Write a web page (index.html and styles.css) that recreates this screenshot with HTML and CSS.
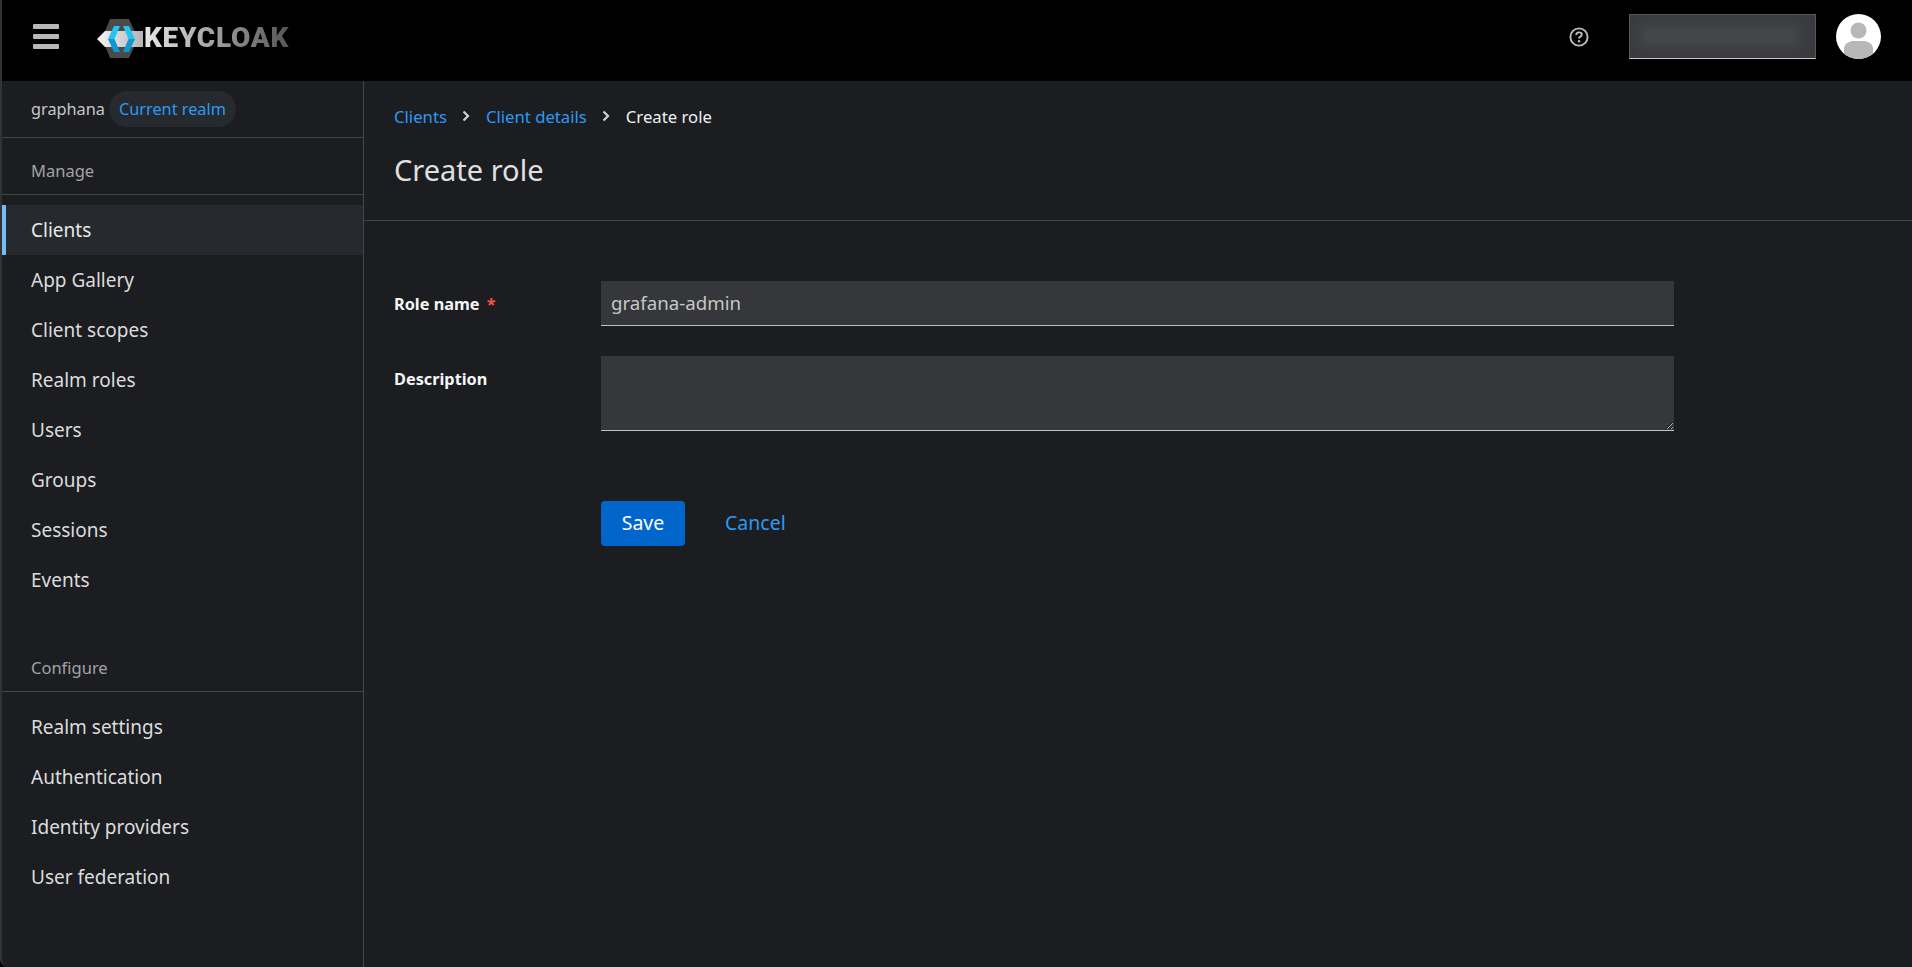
FILE: index.html
```html
<!DOCTYPE html>
<html lang="en">
<head>
  <meta charset="UTF-8">
  <title>Keycloak - Create role</title>
  <link rel="stylesheet" href="styles.css">
</head>
<body>
  <header class="topbar">
    <button class="burger" aria-label="Menu"><span></span><span></span><span></span></button>
    <a class="brand" href="#">
      <svg class="brand-mark" viewBox="0 0 50 40" width="50" height="40">
        <defs>
          <linearGradient id="band" x1="0" x2="1" y1="0" y2="0">
            <stop offset="0" stop-color="#f5f5f5"/>
            <stop offset="1" stop-color="#b4b4b4"/>
          </linearGradient>
          <linearGradient id="chevron" x1="0" x2="0" y1="0" y2="1">
            <stop offset="0" stop-color="#25c3ef"/>
            <stop offset="0.5" stop-color="#25c3ef"/>
            <stop offset="0.5" stop-color="#0f97cf"/>
            <stop offset="1" stop-color="#0f97cf"/>
          </linearGradient>
        </defs>
        <polygon points="13,0 32,0 41,19.500 32,39 13,39 5,19.500" fill="#4a4a4a"/>
        <polygon points="0,20 8,12 46,12 46,28 8,28" fill="url(#band)"/>
        <polygon points="17,7 23,7 17.500,20 23,33 17,33 11,20" fill="url(#chevron)"/>
        <polygon points="32,7 26,7 31.500,20 26,33 32,33 38,20" fill="url(#chevron)"/>
      </svg>
      <span class="brand-text">KEYCLOAK</span>
    </a>
    <div class="topbar-right">
      <svg class="help" viewBox="0 0 20 20" width="20" height="20">
        <circle cx="10" cy="10" r="8.600" fill="none" stroke="#bcbcbc" stroke-width="1.900"/>
        <path d="M7.200 8c0-1.700 1.200-2.600 2.800-2.600s2.800.9 2.800 2.300c0 1.900-2.800 1.900-2.800 3.800" fill="none" stroke="#bcbcbc" stroke-width="1.900"/>
        <circle cx="10" cy="14.300" r="1.200" fill="#bcbcbc"/>
      </svg>
      <div class="user-box"><div class="user-blur"></div></div>
      <svg class="avatar" viewBox="0 0 45 45" width="45" height="45">
        <defs><clipPath id="round"><circle cx="22.500" cy="22.500" r="22.500"/></clipPath></defs>
        <circle cx="22.500" cy="22.500" r="22.500" fill="#fff"/>
        <g clip-path="url(#round)" fill="#b8b8b8">
          <circle cx="22.500" cy="16.500" r="8"/>
          <path d="M8 45V35c0-5 4-7 8-8h13c4 1 8 3 8 8v10z"/>
        </g>
      </svg>
    </div>
  </header>

  <div class="shell">
    <nav class="sidebar">
      <div class="realm">
        <span class="realm-name">graphana</span>
        <span class="realm-chip">Current realm</span>
      </div>
      <div class="nav-title">Manage</div>
      <ul class="nav-list">
        <li class="active"><a href="#">Clients</a></li>
        <li><a href="#">App Gallery</a></li>
        <li><a href="#">Client scopes</a></li>
        <li><a href="#">Realm roles</a></li>
        <li><a href="#">Users</a></li>
        <li><a href="#">Groups</a></li>
        <li><a href="#">Sessions</a></li>
        <li><a href="#">Events</a></li>
      </ul>
      <div class="nav-title nav-title-next">Configure</div>
      <ul class="nav-list">
        <li><a href="#">Realm settings</a></li>
        <li><a href="#">Authentication</a></li>
        <li><a href="#">Identity providers</a></li>
        <li><a href="#">User federation</a></li>
      </ul>
    </nav>

    <main class="content">
      <section class="page-head">
        <ol class="crumbs">
          <li><a href="#">Clients</a></li>
          <li class="sep"><svg viewBox="0 0 8 12" width="8" height="12"><path d="M1.500 1.500 6 6l-4.500 4.500" fill="none" stroke="#d2d2d2" stroke-width="2.200"/></svg></li>
          <li><a href="#">Client details</a></li>
          <li class="sep"><svg viewBox="0 0 8 12" width="8" height="12"><path d="M1.500 1.500 6 6l-4.500 4.500" fill="none" stroke="#d2d2d2" stroke-width="2.200"/></svg></li>
          <li class="current">Create role</li>
        </ol>
        <h1>Create role</h1>
      </section>

      <form class="role-form">
        <label class="field-label" for="role-name">Role name <span class="req">*</span></label>
        <input id="role-name" class="field" type="text" value="grafana-admin">
        <label class="field-label field-label-top" for="role-desc">Description</label>
        <textarea id="role-desc" class="field field-area"></textarea>
        <div class="actions">
          <button class="btn-save" type="button">Save</button>
          <a class="btn-cancel" href="#">Cancel</a>
        </div>
      </form>
    </main>
  </div>
</body>
</html>
```

FILE: styles.css
```css
html, body {
  height: 100%;
  margin: 0;
}
body {
  display: flex;
  flex-direction: column;
  height: 967px;
  overflow: hidden;
  background: #000;
  color: #dcdcdc;
  font-family: "Noto Sans", sans-serif;
  font-size: 19px;
  color-scheme: dark;
}
a {
  color: inherit;
  text-decoration: none;
}
ul, ol {
  list-style: none;
  margin: 0;
  padding: 0;
}

/* top bar */
.topbar {
  display: flex;
  align-items: center;
  height: 81px;
  box-sizing: border-box;
  flex: none;
  padding-bottom: 8px;
  background: #000;
  border-left: 2px solid #333;
}
.burger {
  display: flex;
  flex-direction: column;
  gap: 5px;
  width: 26px;
  margin-left: 31px;
  padding: 0;
  background: none;
  border: 0;
}
.burger span {
  display: block;
  height: 5px;
  border-radius: 1px;
  background: #b8b8b8;
}
.brand {
  display: flex;
  align-items: center;
  margin: 4px 0 0 38px;
}
.brand-mark {
  flex: none;
}
.brand-text {
  margin: -2px 0 0 -3px;
  font-family: Roboto, sans-serif;
  font-size: 28px;
  font-weight: 900;
  letter-spacing: 0.700px;
  background: linear-gradient(90deg, #e8e8e8, #555);
  -webkit-background-clip: text;
  background-clip: text;
  color: transparent;
}
.topbar-right {
  display: flex;
  align-items: center;
  margin-left: auto;
  padding-right: 31px;
}
.help {
  margin-right: 40px;
}
.user-box {
  width: 187px;
  height: 45px;
  box-sizing: border-box;
  overflow: hidden;
  background: #3a3b3e;
  border: 1px solid #55565a;
  border-bottom: 1px solid #c8c8c8;
}
.user-blur {
  width: 150px;
  height: 14px;
  margin: 14px 0 0 14px;
  background: #444547;
  box-shadow: 0 0 12px 6px #444547;
}
.avatar {
  margin-left: 20px;
}

/* sidebar */
.shell {
  display: flex;
  flex: 1;
  min-height: 0;
  border-left: 2px solid #333;
  border-bottom-left-radius: 8px;
  overflow: hidden;
  background: #1b1d21;
}
.sidebar {
  flex: none;
  width: 361px;
  border-right: 1px solid #444548;
}
.realm {
  display: flex;
  align-items: center;
  gap: 4px;
  height: 56px;
  padding-left: 29px;
  border-bottom: 1px solid #444548;
  font-size: 16.300px;
}
.realm-name {
  color: #c7c7c7;
}
.realm-chip {
  padding: 6px 10px;
  border-radius: 18px;
  background: #26292d;
  color: #2b9af3;
  line-height: 24px;
}
.nav-title {
  height: 57px;
  padding: 21px 0 0 29px;
  box-sizing: border-box;
  border-bottom: 1px solid #444548;
  color: #a3a3a3;
  font-size: 16.500px;
  line-height: 24px;
}
.nav-title-next {
  height: 56px;
  margin-top: 31px;
  padding-top: 20px;
}
.nav-list {
  padding-top: 10px;
}
.nav-list a {
  display: block;
  height: 50px;
  padding-left: 29px;
  line-height: 50px;
}
.active a {
  background: #26292d;
  box-shadow: inset 4px 0 0 #73bcf7;
  color: #e8e8e8;
}

/* main */
.content {
  flex: 1;
  min-width: 0;
}
.page-head {
  height: 140px;
  padding: 21px 30px 0;
  box-sizing: border-box;
  border-bottom: 1px solid #444548;
}
.crumbs {
  display: flex;
  align-items: center;
  height: 28px;
  font-size: 16.700px;
  color: #2b9af3;
}
.sep {
  display: flex;
  margin: 0 16px 0 15px;
}
.current {
  color: #f0f0f0;
}
h1 {
  margin: 20px 0 0;
  color: #e0e0e0;
  font-size: 29px;
  font-weight: 400;
  line-height: 40px;
}
.role-form {
  display: grid;
  grid-template-columns: 207px 1073px;
  grid-template-rows: 45px 75px auto;
  row-gap: 30px;
  padding: 60px 30px 0;
}
.field-label {
  align-self: center;
  color: #f5f5f5;
  font-size: 16.300px;
  font-weight: 700;
}
.field-label-top {
  align-self: start;
  padding-top: 12px;
}
.req {
  margin-left: 3px;
  color: #fe5142;
}
.field {
  display: block;
  width: 100%;
  height: 100%;
  box-sizing: border-box;
  margin: 0;
  padding: 0 10px 2px;
  border: 0;
  border-bottom: 1px solid #c0c0c0;
  border-radius: 0;
  outline: 0;
  background: #36373a;
  color: #c7c7c7;
  font-family: inherit;
  font-size: 18.700px;
}
.field-area {
  resize: vertical;
}
.actions {
  display: flex;
  align-items: center;
  grid-column: 2;
  gap: 40px;
  margin-top: 40px;
}
.btn-save {
  width: 84px;
  height: 45px;
  padding: 0 0 2px;
  border: 0;
  border-radius: 4px;
  background: #06c;
  color: #fff;
  font-family: inherit;
  font-size: 19.500px;
}
.btn-cancel {
  padding-bottom: 2px;
  color: #2b9af3;
  font-size: 19.500px;
}
```
